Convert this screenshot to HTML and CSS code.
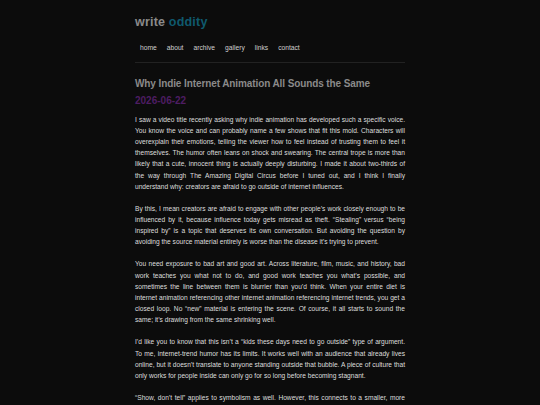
FILE: index.html
```html
<!DOCTYPE html>
<html lang="en">
<head>
<meta charset="utf-8">
<title>write oddity</title>
<link rel="stylesheet" href="styles.css">
</head>
<body>
<div class="page">
  <header class="site-header">
    <h1 class="site-title">write <span class="accent">oddity</span></h1>
    <nav class="nav">
      <a href="#">home</a>
      <a href="#">about</a>
      <a href="#">archive</a>
      <a href="#">gallery</a>
      <a href="#">links</a>
      <a href="#">contact</a>
    </nav>
  </header>
  <main class="post">
    <h2 class="post-title">Why Indie Internet Animation All Sounds the Same</h2>
    <div class="post-date">2026-06-22</div>
    <p>I saw a video title recently asking why indie animation has developed such a specific voice. You know the voice and can probably name a few shows that fit this mold. Characters will overexplain their emotions, telling the viewer how to feel instead of trusting them to feel it themselves. The humor often leans on shock and swearing. The central trope is more than likely that a cute, innocent thing is actually deeply disturbing. I made it about two-thirds of the way through The Amazing Digital Circus before I tuned out, and I think I finally understand why: creators are afraid to go outside of internet influences.</p>
    <p>By this, I mean creators are afraid to engage with other people’s work closely enough to be influenced by it, because influence today gets misread as theft. “Stealing” versus “being inspired by” is a topic that deserves its own conversation. But avoiding the question by avoiding the source material entirely is worse than the disease it’s trying to prevent.</p>
    <p>You need exposure to bad art and good art. Across literature, film, music, and history, bad work teaches you what not to do, and good work teaches you what’s possible, and sometimes the line between them is blurrier than you’d think. When your entire diet is internet animation referencing other internet animation referencing internet trends, you get a closed loop. No “new” material is entering the scene. Of course, it all starts to sound the same; it’s drawing from the same shrinking well.</p>
    <p>I’d like you to know that this isn’t a “kids these days need to go outside” type of argument. To me, internet-trend humor has its limits. It works well with an audience that already lives online, but it doesn’t translate to anyone standing outside that bubble. A piece of culture that only works for people inside can only go for so long before becoming stagnant.</p>
    <p>“Show, don’t tell” applies to symbolism as well. However, this connects to a smaller, more specific point: the most interesting symbols are ones the audience has to work for, not ones that are explained to them in the first five minutes of an episode.</p>
  </main>
</div>
</body>
</html>
```

FILE: styles.css
```css
html, body {
  margin: 0;
  padding: 0;
  background: #0c0c0c;
}

body {
  font-family: "Liberation Sans", Arial, sans-serif;
  color: #dedede;
}

.page {
  width: 270px;
  margin: 0 auto;
}

.site-header {
  padding-top: 14px;
  border-bottom: 1px solid #222222;
  padding-bottom: 8px;
}

.site-title {
  margin: 0;
  font-size: 12.5px;
  line-height: 16px;
  font-weight: bold;
  letter-spacing: 0.2px;
  color: #8a8a8a;
}

.accent {
  color: #0f5a6e;
}

.nav {
  display: flex;
  margin-top: 12px;
}

.nav a {
  display: block;
  padding: 2px 5px;
  font-size: 6.7px;
  line-height: 8px;
  color: #d0d0d0;
  text-decoration: none;
}

.post {
  padding-top: 14px;
}

.post-title {
  margin: 0;
  font-size: 10px;
  line-height: 13px;
  font-weight: bold;
  letter-spacing: -0.1px;
  color: #8a8a8a;
}

.post-date {
  margin-top: 4px;
  font-size: 10px;
  line-height: 13px;
  font-weight: bold;
  color: #4e1d63;
}

.post p {
  margin: 6.5px 0 10.8px;
  font-size: 6.63px;
  line-height: 11.2px;
  text-align: justify;
}

.post p + p {
  margin-top: 0;
}
```
